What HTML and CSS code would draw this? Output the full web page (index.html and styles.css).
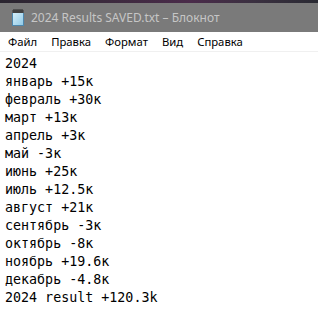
FILE: index.html
```html
<!DOCTYPE html>
<html lang="ru">
<head>
<meta charset="utf-8">
<title>Блокнот</title>
<link rel="stylesheet" href="styles.css">
</head>
<body>
<div class="window">
  <div class="wallpaper"></div>
  <div class="titlebar">
    <svg class="app-icon" width="14" height="17" viewBox="0 0 14 17">
      <defs>
        <linearGradient id="pad" x1="0" y1="0" x2="1" y2="1">
          <stop offset="0" stop-color="#d9f1fb"/>
          <stop offset="1" stop-color="#8fc9e6"/>
        </linearGradient>
      </defs>
      <rect x="1.5" y="2.5" width="11" height="14" fill="url(#pad)" stroke="#4d87ad"/>
      <rect x="1" y="1" width="12" height="3" fill="#5a5a5a"/>
      <g stroke="#2b2b2b" stroke-width="1">
        <line x1="3" y1="0" x2="3" y2="4"/>
        <line x1="5" y1="0" x2="5" y2="4"/>
        <line x1="7" y1="0" x2="7" y2="4"/>
        <line x1="9" y1="0" x2="9" y2="4"/>
        <line x1="11" y1="0" x2="11" y2="4"/>
      </g>
    </svg>
    <span class="title">2024 Results SAVED.txt – Блокнот</span>
  </div>
  <div class="menubar">
    <span class="menu-item">Файл</span>
    <span class="menu-item">Правка</span>
    <span class="menu-item">Формат</span>
    <span class="menu-item">Вид</span>
    <span class="menu-item">Справка</span>
  </div>
  <div class="editor">
    <div class="line">2024</div>
    <div class="line">январь +15к</div>
    <div class="line">февраль +30к</div>
    <div class="line">март +13к</div>
    <div class="line">апрель +3к</div>
    <div class="line">май -3к</div>
    <div class="line">июнь +25к</div>
    <div class="line">июль +12.5к</div>
    <div class="line">август +21к</div>
    <div class="line">сентябрь -3к</div>
    <div class="line">октябрь -8к</div>
    <div class="line">ноябрь +19.6к</div>
    <div class="line">декабрь -4.8к</div>
    <div class="line">2024 result +120.3k</div>
  </div>
</div>
</body>
</html>
```
FILE: styles.css
```css
html, body {
  margin: 0;
  padding: 0;
  background: #ffffff;
}
.window {
  width: 318px;
  height: 316px;
  overflow: hidden;
  display: flex;
  flex-direction: column;
}
.wallpaper {
  height: 3px;
  background: linear-gradient(90deg, #2a2530 0%, #3a2a3c 30%, #4a2b4a 60%, #3a3040 80%, #2a2a33 100%);
}
.titlebar {
  height: 29px;
  background: #7a7a7a;
  display: flex;
  align-items: center;
  padding-left: 11px;
  gap: 6px;
  box-sizing: border-box;
}
.app-icon {
  flex: none;
}
.title {
  font-family: "Noto Sans", "Open Sans", sans-serif;
  font-size: 12px;
  color: #c6c6c6;
  white-space: nowrap;
}
.menubar {
  height: 19px;
  background: #ffffff;
  border-bottom: 1px solid #f0f0f0;
  display: flex;
  align-items: center;
  padding-left: 1px;
}
.menu-item {
  font-family: "Noto Sans", "Open Sans", sans-serif;
  font-size: 11.3px;
  color: #000000;
  padding: 0 7px;
  white-space: nowrap;
}
.editor {
  flex: 1;
  padding: 3px 0 0 5px;
  font-family: "DejaVu Sans Mono", "Liberation Mono", monospace;
  font-size: 13.33px;
  line-height: 18px;
  color: #000000;
}
.line {
  white-space: pre;
}
```
